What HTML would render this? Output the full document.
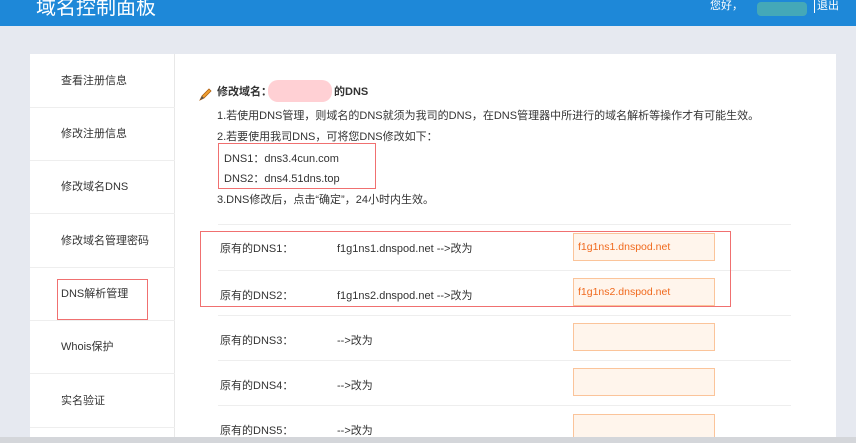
<!DOCTYPE html>
<html><head><meta charset="utf-8"><style>
*{margin:0;padding:0;box-sizing:border-box}
body{width:856px;height:443px;overflow:hidden;background:#e6e9f0;font-family:"Liberation Sans","Noto Sans CJK SC",sans-serif;color:#333;position:relative;font-size:11px}
.hd{position:absolute;left:0;top:0;width:856px;height:26px;background:#1e88d8}
.hd .t{position:absolute;left:36px;top:-9px;color:#fff;font-size:20px}
.hd .r{position:absolute;left:710px;top:-3px;color:#fff;font-size:11px}
.blur{position:absolute;left:757px;top:2px;width:50px;height:14px;background:#4eb0b0;border-radius:4px;opacity:.8}
.hd .q{position:absolute;left:814px;top:-3px;color:#fff;font-size:11px;border-left:1px solid #fff;padding-left:2px}
.panel{position:absolute;left:30px;top:54px;width:806px;height:389px;background:#fff}
.side{position:absolute;left:30px;top:54px;width:145px;height:389px;border-right:1px solid #e8e8e8}
.side div{position:absolute;left:0;width:145px;height:54px;border-bottom:1px solid #eee;padding-left:31px;line-height:54px;font-size:11px}
.a{position:absolute;font-size:11px;white-space:nowrap}
.box{position:absolute;border:1px solid #f07070;z-index:5}
.line{position:absolute;left:218px;width:573px;height:1px;background:#eee}
.in{position:absolute;left:573px;width:142px;height:28px;border:1px solid #fbc49a;background:#fff5ec;color:#f06a1e;font-size:10.5px;padding:7px 4px}
.strip{position:absolute;left:0;top:437px;width:856px;height:6px;background:#d4d6da}
</style></head><body>
<div class="hd"><span class="t">域名控制面板</span><span class="r">您好，</span><div class="blur"></div><span class="q">退出</span></div>
<div class="panel"></div>
<div class="side">
<div style="top:0">查看注册信息</div>
<div style="top:53px">修改注册信息</div>
<div style="top:106px">修改域名DNS</div>
<div style="top:160px">修改域名管理密码</div>
<div style="top:213px">DNS解析管理</div>
<div style="top:266px">Whois保护</div>
<div style="top:320px">实名验证</div>
</div>
<div style="position:absolute;left:57px;top:279px;width:91px;height:41px;box-shadow:inset 0 0 0 1px #f07070;z-index:6"></div>
<svg style="position:absolute;left:198px;top:88px" width="14" height="14"><path d="M2 12 L4 8 L11 1 L13 3 L6 10 Z" fill="#f0a030" stroke="#b06010" stroke-width=".8"/><path d="M2 12 L4 8 L6 10Z" fill="#555"/></svg>
<div class="a" style="left:217px;top:83px;font-weight:bold">修改域名：</div>
<div style="position:absolute;left:268px;top:80px;width:64px;height:22px;background:#ffd0d4;border-radius:10px"></div>
<div class="a" style="left:334px;top:83px;font-weight:bold">的DNS</div>
<div class="a" style="left:217px;top:107px">1.若使用DNS管理，则域名的DNS就须为我司的DNS，在DNS管理器中所进行的域名解析等操作才有可能生效。</div>
<div class="a" style="left:217px;top:128px">2.若要使用我司DNS，可将您DNS修改如下：</div>
<div class="a" style="left:224px;top:150px">DNS1：dns3.4cun.com</div>
<div class="a" style="left:224px;top:170px">DNS2：dns4.51dns.top</div>
<div class="box" style="left:218px;top:143px;width:158px;height:46px"></div>
<div class="a" style="left:217px;top:191px">3.DNS修改后，点击“确定”，24小时内生效。</div>
<div class="line" style="top:224px"></div>
<div class="line" style="top:270px"></div>
<div class="line" style="top:315px"></div>
<div class="line" style="top:360px"></div>
<div class="line" style="top:405px"></div>
<div class="a" style="left:220px;top:240px">原有的DNS1：</div><div class="a" style="left:337px;top:240px">f1g1ns1.dnspod.net --&gt;改为</div><div class="in" style="top:233px">f1g1ns1.dnspod.net</div>
<div class="a" style="left:220px;top:287px">原有的DNS2：</div><div class="a" style="left:337px;top:287px">f1g1ns2.dnspod.net --&gt;改为</div><div class="in" style="top:278px">f1g1ns2.dnspod.net</div>
<div class="a" style="left:220px;top:332px">原有的DNS3：</div><div class="a" style="left:337px;top:332px">--&gt;改为</div><div class="in" style="top:323px"></div>
<div class="a" style="left:220px;top:377px">原有的DNS4：</div><div class="a" style="left:337px;top:377px">--&gt;改为</div><div class="in" style="top:368px"></div>
<div class="a" style="left:220px;top:422px">原有的DNS5：</div><div class="a" style="left:337px;top:422px">--&gt;改为</div><div class="in" style="top:414px"></div>
<div class="box" style="left:200px;top:231px;width:531px;height:76px"></div>
<div class="strip"></div>
</body></html>
